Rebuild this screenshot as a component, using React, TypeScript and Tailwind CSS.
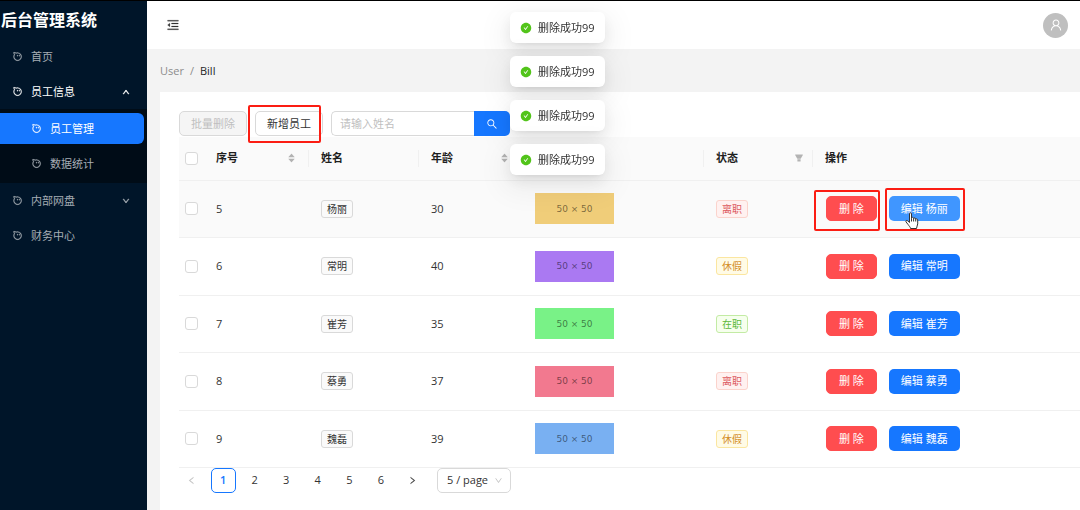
import type { ReactNode } from 'react';
import clsx from 'clsx';
import {
  AiFillCaretDown,
  AiFillCaretUp,
  AiFillCheckCircle,
  AiFillFilter,
  AiOutlineAliwangwang,
  AiOutlineDown,
  AiOutlineLeft,
  AiOutlineMenuFold,
  AiOutlineRight,
  AiOutlineSearch,
  AiOutlineUp,
  AiOutlineUser,
} from 'react-icons/ai';

type Status = '离职' | '休假' | '在职';

interface Employee {
  id: number;
  name: string;
  age: number;
  status: Status;
  cover: string;
}

const employees: Employee[] = [
  { id: 5, name: '杨丽', age: 30, status: '离职', cover: 'bg-[#f0cd79]' },
  { id: 6, name: '常明', age: 40, status: '休假', cover: 'bg-[#aa79f2]' },
  { id: 7, name: '崔芳', age: 35, status: '在职', cover: 'bg-[#79f287]' },
  { id: 8, name: '蔡勇', age: 37, status: '离职', cover: 'bg-[#f2798f]' },
  { id: 9, name: '魏磊', age: 39, status: '休假', cover: 'bg-[#79b0f2]' },
];

const statusStyles: Record<Status, string> = {
  离职: 'border-[#fbd3cc] bg-[#fff1f0] text-[#dc5a60]',
  休假: 'border-[#fbe6a0] bg-[#fffbe6] text-[#d48f2a]',
  在职: 'border-[#c3eba4] bg-[#f6ffed] text-[#5cb83a]',
};

const messages = ['删除成功99', '删除成功99', '删除成功99', '删除成功99'];

function MenuItem({
  label,
  sub,
  active,
  bright,
  arrow,
}: {
  label: string;
  sub?: boolean;
  active?: boolean;
  bright?: boolean;
  arrow?: ReactNode;
}) {
  return (
    <li className="py-0.5 pr-[3px]">
      <a
        href="#"
        className={clsx(
          'flex h-[31px] items-center gap-2 rounded-r-md pr-3.5',
          sub ? 'pl-[31px]' : 'pl-3',
          active ? 'bg-[#1677ff] text-white' : bright ? 'text-white' : 'text-[#a6adb4]',
        )}
      >
        <AiOutlineAliwangwang size={11} strokeWidth={20} />
        <span className="flex-1">{label}</span>
        {arrow}
      </a>
    </li>
  );
}

function Sidebar() {
  return (
    <aside className="w-[147px] shrink-0 bg-[#001529]">
      <h1 className="flex h-[38px] items-center pl-px text-[16px] font-bold whitespace-nowrap text-white">
        后台管理系统
      </h1>
      <ul>
        <MenuItem label="首页" />
        <MenuItem label="员工信息" bright arrow={<AiOutlineUp size={8} strokeWidth={70} />} />
        <li>
          <ul className="bg-[#000c17] py-0.5">
            <MenuItem label="员工管理" sub active />
            <MenuItem label="数据统计" sub />
          </ul>
        </li>
        <MenuItem label="内部网盘" arrow={<AiOutlineDown size={8} strokeWidth={70} />} />
        <MenuItem label="财务中心" />
      </ul>
    </aside>
  );
}

function Tag({ className, children }: { className: string; children: ReactNode }) {
  return (
    <span
      className={clsx(
        'inline-flex h-[18px] items-center rounded-[3px] border px-[5px] align-middle text-[10px]',
        className,
      )}
    >
      {children}
    </span>
  );
}

function Checkbox({ label }: { label: string }) {
  return (
    <input
      type="checkbox"
      aria-label={label}
      className="block size-[13px] appearance-none rounded-[3px] border border-[#d9d9d9] bg-white checked:bg-[#1677ff]"
    />
  );
}

function Highlight({ className }: { className: string }) {
  return (
    <span
      className={clsx('pointer-events-none absolute rounded-[2px] border-2 border-[#fb1d13]', className)}
    />
  );
}

function Sorter() {
  return (
    <span className="flex flex-col text-[#b3b3b3]">
      <AiFillCaretUp size={9} className="-mb-1" />
      <AiFillCaretDown size={9} />
    </span>
  );
}

function HeadCell({
  title,
  extra,
  divider,
  className,
}: {
  title: string;
  extra?: ReactNode;
  divider?: boolean;
  className?: string;
}) {
  return (
    <th scope="col" className={clsx('p-0 text-left font-bold', className)}>
      <div
        className={clsx(
          'flex h-[17px] items-center justify-between border-r pr-3 pl-3',
          divider ? 'border-[#f0f0f0]' : 'border-transparent',
        )}
      >
        {title}
        {extra}
      </div>
    </th>
  );
}

function HandCursor() {
  return (
    <svg
      viewBox="0 0 14 18"
      className="pointer-events-none absolute top-4 left-4 z-10 h-[18px] w-[14px]"
      fill="#fff"
      stroke="#333"
      strokeWidth="1"
      strokeLinejoin="round"
    >
      <path d="M4.5 10.5V1.8c0-1.4 2-1.4 2 0v4.4c0-1.2 2.1-1.1 2.1.1v.5c0-1.2 2.1-1.1 2.1.2v.5c0-1.1 2-.9 2 .4v4c0 1.7-1.2 2.6-1.2 4.6H5.5c0-1.5-1.6-2.5-2.4-4L1 9.9c-.7-1.2.8-1.9 1.7-1.1z" />
      <path d="M6.500 6.200v3.300M8.600 6.800v2.700M10.700 7.500v2" />
    </svg>
  );
}

function EmployeeTable() {
  return (
    <table className="mt-px w-full table-fixed border-collapse">
      <colgroup>
        <col className="w-[25px]" />
        <col className="w-[105px]" />
        <col className="w-[110px]" />
        <col className="w-[103px]" />
        <col className="w-[182px]" />
        <col className="w-[109px]" />
        <col />
      </colgroup>
      <thead>
        <tr className="h-[43px] border-b border-[#f0f0f0] bg-[#fafafa] text-[#1f1f1f]">
          <th scope="col" className="p-0 pl-1.5">
            <Checkbox label="全选" />
          </th>
          <HeadCell title="序号" divider extra={<Sorter />} />
          <HeadCell title="姓名" divider />
          <HeadCell title="年龄" extra={<Sorter />} />
          <HeadCell title="" divider />
          <HeadCell
            title="状态"
            divider
            extra={<AiFillFilter size={10} className="-mr-1 text-[#b3b3b3]" />}
          />
          <HeadCell title="操作" />
        </tr>
      </thead>
      <tbody>
        {employees.map((item, i) => (
          <tr
            key={item.id}
            className={clsx('h-[57px] border-b border-[#f0f0f0] even:h-[58px]', i === 0 && 'bg-[#fafafa]')}
          >
            <td className="p-0 pl-1.5">
              <Checkbox label={`选择 ${item.name}`} />
            </td>
            <td className="p-0 pl-3">{item.id}</td>
            <td className="p-0 pl-3">
              <Tag className="border-[#d9d9d9] bg-[#fafafa]">{item.name}</Tag>
            </td>
            <td className="p-0 pl-3">{item.age}</td>
            <td className="p-0 pl-[13px]">
              <div
                className={clsx(
                  'flex h-[31px] w-[79px] items-center justify-center font-["DejaVu_Sans"] text-[9px] text-black/50',
                  item.cover,
                )}
              >
                50 × 50
              </div>
            </td>
            <td className="p-0 pl-3">
              <Tag className={statusStyles[item.status]}>{item.status}</Tag>
            </td>
            <td className="p-0 pl-[13px]">
              <div className="flex gap-3">
                <div className="relative">
                  <button className="h-[25px] rounded-[5px] border border-[#ff4d4f] bg-[#ff4d4f] px-3 whitespace-nowrap text-white">
                    删 除
                  </button>
                  {i === 0 && <Highlight className="-top-1.5 -left-3 h-[41px] w-[66px]" />}
                </div>
                <div className="relative">
                  <button
                    className={clsx(
                      'h-[25px] rounded-[5px] px-3 whitespace-nowrap text-white',
                      i === 0 ? 'bg-[#4096ff]' : 'bg-[#1677ff]',
                    )}
                  >
                    编辑 {item.name}
                  </button>
                  {i === 0 && (
                    <>
                      <Highlight className="-top-2 -left-1 h-[43px] w-20" />
                      <HandCursor />
                    </>
                  )}
                </div>
              </div>
            </td>
          </tr>
        ))}
      </tbody>
    </table>
  );
}

function Pagination() {
  return (
    <nav aria-label="分页" className="flex items-center gap-3">
      <div className="flex w-[246px] items-center justify-between">
        <button aria-label="上一页" className="flex size-[25px] items-center justify-center text-[#bfbfbf]">
          <AiOutlineLeft size={9} strokeWidth={30} />
        </button>
        {[1, 2, 3, 4, 5, 6].map((page) => (
          <button
            key={page}
            className={clsx(
              'size-[25px] rounded-[5px]',
              page === 1 && 'border border-[#1677ff] bg-white font-semibold text-[#1677ff]',
            )}
          >
            {page}
          </button>
        ))}
        <button aria-label="下一页" className="flex size-[25px] items-center justify-center">
          <AiOutlineRight size={9} strokeWidth={30} />
        </button>
      </div>
      <div className="relative">
        <select
          aria-label="每页条数"
          className="h-[25px] w-[74px] appearance-none rounded-[5px] border border-[#d9d9d9] bg-white pl-[9px]"
        >
          <option>5 / page</option>
          <option>10 / page</option>
          <option>20 / page</option>
        </select>
        <AiOutlineDown size={9} className="pointer-events-none absolute top-2 right-2 text-[#bfbfbf]" />
      </div>
    </nav>
  );
}

export default function App() {
  return (
    <div className='flex min-h-screen overflow-hidden border-t border-black bg-[#f3f3f3] font-["Open_Sans","Noto_Sans_CJK_SC",sans-serif] text-[11px] leading-4 text-[#333]'>
      <Sidebar />

      <div className="flex min-w-0 flex-1 flex-col">
        {/* Header */}
        <header className="flex h-12 items-center justify-between bg-white pr-3 pl-[19px]">
          <button aria-label="收起菜单">
            <AiOutlineMenuFold size={14} strokeWidth={15} />
          </button>
          <div className="flex size-[25px] items-center justify-center rounded-full bg-[#bfbfbf] text-white">
            <AiOutlineUser size={14} />
          </div>
        </header>

        <main className="flex flex-1 flex-col pl-[13px]">
          {/* Breadcrumb */}
          <nav aria-label="面包屑" className="flex h-[43px] items-center gap-1.5 text-[#8c8c8c]">
            <a href="#">User</a>
            <span>/</span>
            <span className="text-[#1f1f1f]">Bill</span>
          </nav>

          <section className="flex-1 bg-white pt-[19px] pl-[19px]">
            {/* Toolbar */}
            <div className="flex items-center gap-2">
              <button
                disabled
                className="h-[25px] rounded-[5px] border border-[#d9d9d9] bg-[#f5f5f5] px-[11px] text-[#bfbfbf]"
              >
                批量删除
              </button>
              <div className="relative">
                <button className="h-[25px] rounded-[5px] border border-[#d9d9d9] bg-white px-[11px]">
                  新增员工
                </button>
                <Highlight className="-top-1.5 -left-[7px] h-[38px] w-[73px]" />
              </div>
              <div className="flex">
                <input
                  type="text"
                  aria-label="姓名"
                  placeholder="请输入姓名"
                  className="h-[25px] w-[143px] rounded-l-[5px] border border-r-0 border-[#d9d9d9] bg-white px-2 placeholder:text-[#bfbfbf]"
                />
                <button
                  aria-label="搜索"
                  className="flex h-[25px] w-9 items-center justify-center rounded-r-[5px] bg-[#1677ff] text-white"
                >
                  <AiOutlineSearch size={12} />
                </button>
              </div>
            </div>

            <EmployeeTable />
            <Pagination />
          </section>
        </main>
      </div>

      {/* Toast messages */}
      <div role="status" className="fixed top-3 left-[510px] z-20 flex flex-col gap-[13px]">
        {messages.map((text, i) => (
          <div
            key={i}
            className="flex h-[31px] items-center gap-1.5 rounded-md bg-white px-[10px] shadow-[0_6px_16px_0_rgba(0,0,0,0.08),0_3px_6px_-4px_rgba(0,0,0,0.12),0_9px_28px_8px_rgba(0,0,0,0.05)]"
          >
            <AiFillCheckCircle size={12} className="text-[#52c41a]" />
            {text}
          </div>
        ))}
      </div>
    </div>
  );
}
